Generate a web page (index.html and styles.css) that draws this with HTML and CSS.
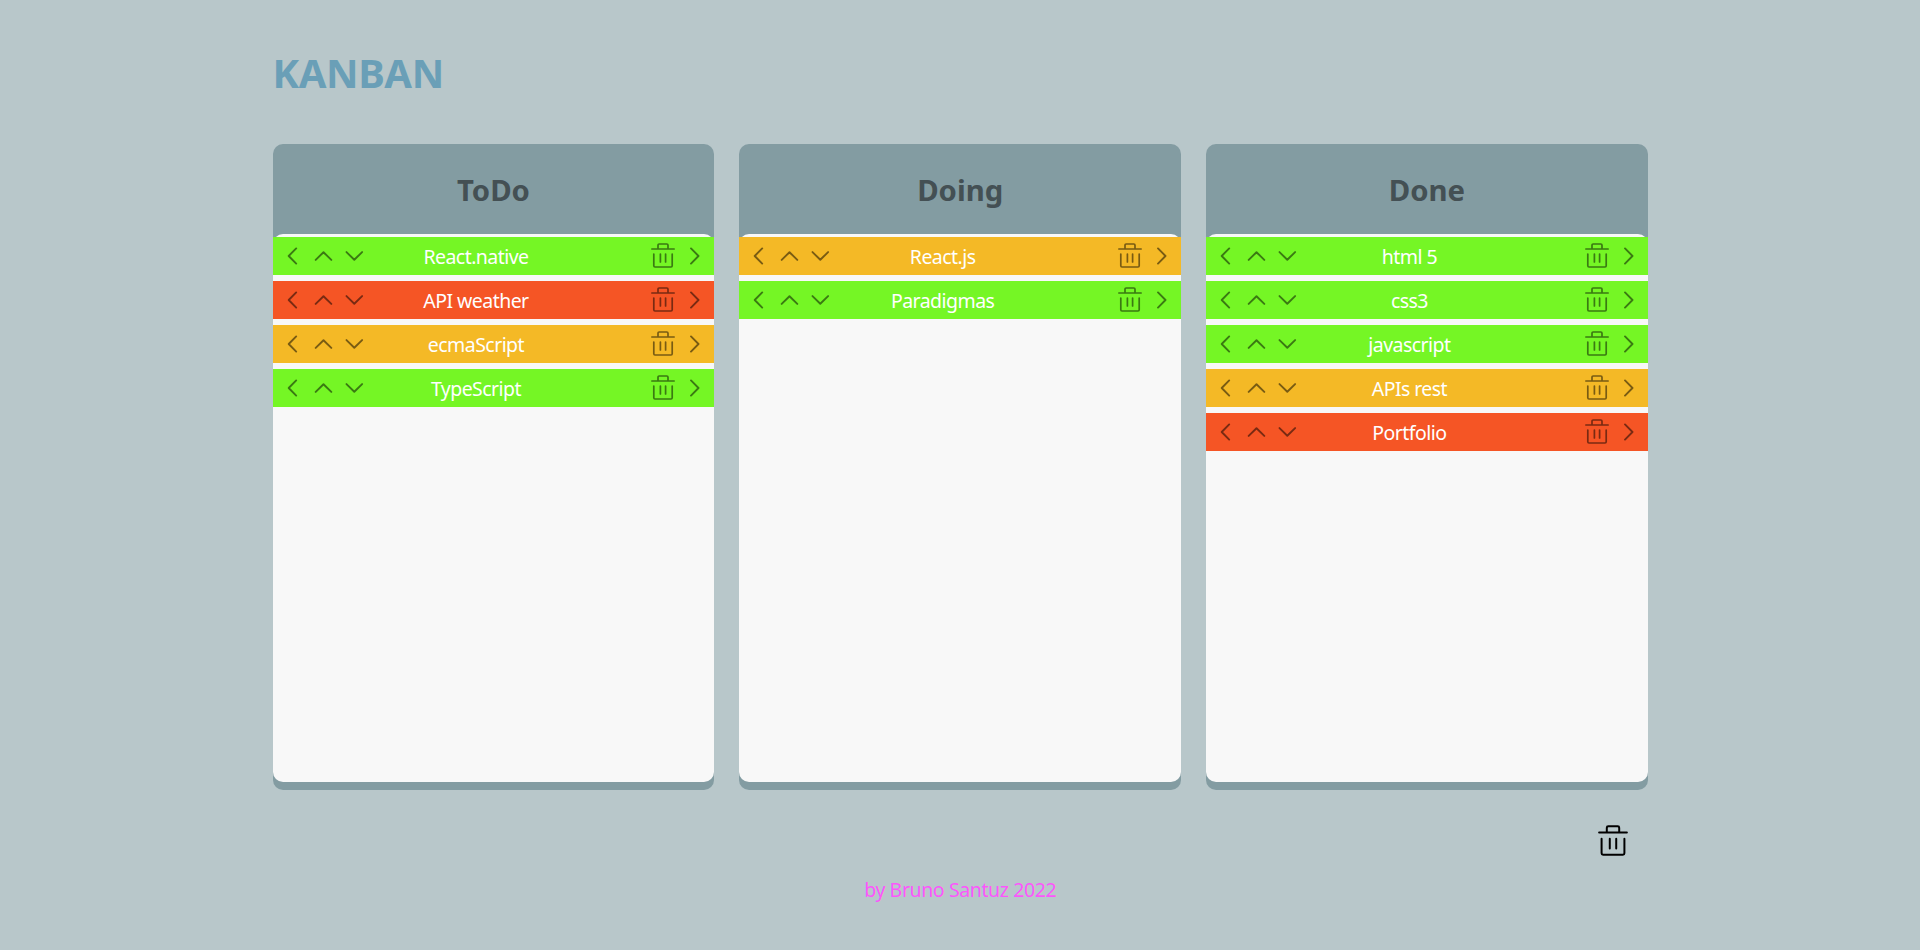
FILE: index.html
```html
<!DOCTYPE html>
<html lang="en">
<head>
<meta charset="utf-8">
<title>Kanban</title>
<link rel="stylesheet" href="styles.css">
</head>
<body>
<svg class="sprite" aria-hidden="true">
  <symbol id="left" viewBox="0 0 31 38"><path d="M19.2 11.4 11.7 19l7.5 7.6"/></symbol>
  <symbol id="right" viewBox="0 0 31 38"><path d="m12 11.4 7.5 7.6-7.5 7.6"/></symbol>
  <symbol id="up" viewBox="0 0 31 38"><path d="m7.7 22.9 7.8-7.7 7.8 7.7"/></symbol>
  <symbol id="down" viewBox="0 0 31 38"><path d="m7.5 15.1 7.8 7.7 7.8-7.7"/></symbol>
  <symbol id="trash" viewBox="0 0 24 25"><path d="M.8 6h22.4M7 6V2.2Q7 1 8.2 1h7.6Q17 1 17 2.2V6M2.8 11v11.8Q2.8 24 4 24h16q1.2 0 1.2-1.2V11M9.4 11v8M14.6 11v8"/></symbol>
</svg>
<main class="app">
  <h1 class="title">KANBAN</h1>
  <div class="board" id="board"></div>
  <div class="bin"><svg class="bin-icon"><use href="#trash"/></svg></div>
  <footer class="footer"><span class="credit">by Bruno Santuz 2022</span></footer>
</main>
<script src="board.js"></script>
</body>
</html>
```
FILE: styles.css
```css
* { box-sizing: border-box; }
body {
  margin: 0;
  min-height: 950px;
  background: #b8c7ca;
  font-family: "Noto Sans", "Open Sans", sans-serif;
}
.sprite { position: absolute; width: 0; height: 0; }
.app { width: 1375.2px; margin: 0 0 0 272.6px; padding-top: 46px; }
.title {
  margin: 0 0 44px;
  height: 54px;
  line-height: 54px;
  font-size: 40px;
  font-weight: 700;
  letter-spacing: -0.4px;
  color: #6a9fb7;
}
.board { display: grid; grid-template-columns: repeat(3, 1fr); gap: 25px; }
.column {
  height: 646px;
  display: flex;
  flex-direction: column;
  padding-bottom: 8px;
  border-radius: 10px;
  background: #839ca2;
}
.column-title {
  margin: 0;
  height: 90px;
  line-height: 93px;
  text-align: center;
  font-size: 29.3px;
  font-weight: 700;
  color: #445054;
}
.cards {
  flex: 1;
  display: flex;
  flex-direction: column;
  gap: 6px;
  padding-top: 3px;
  border-radius: 10px;
  background: #f8f8f8;
}
.card { display: flex; height: 38px; padding: 0 4px; }
.green { background: #75f625; }
.orange { background: #f4b926; }
.red { background: #f55525; }
.label {
  flex: 1;
  margin-right: 66px;
  text-align: center;
  white-space: nowrap;
  line-height: 40px;
  font-size: 19.5px;
  letter-spacing: -0.55px;
  color: #fff;
}
.icon, .trash, .bin-icon { fill: none; stroke: #000; stroke-linecap: round; stroke-linejoin: round; }
.icon { width: 31px; height: 38px; stroke-width: 1.9; opacity: .5; }
.trash { width: 24px; height: 25px; margin: 6px 4px 0 3px; stroke-width: 1.7; opacity: .5; }
.bin { display: flex; justify-content: flex-end; padding: 35px 20px 0 0; }
.bin-icon { width: 30px; height: 31px; stroke-width: 1.6; }
.footer { display: flex; justify-content: center; padding-top: 17px; }
.credit {
  font-size: 19.5px;
  line-height: 34px;
  letter-spacing: -0.4px;
  color: #fc56fc;
}
```
FILE: board.js
```js
const columns = [
  ["ToDo", [["React.native", "green"], ["API weather", "red"], ["ecmaScript", "orange"], ["TypeScript", "green"]]],
  ["Doing", [["React.js", "orange"], ["Paradigmas", "green"]]],
  ["Done", [["html 5", "green"], ["css3", "green"], ["javascript", "green"], ["APIs rest", "orange"], ["Portfolio", "red"]]]
];

const icon = (name) => `<svg class="icon"><use href="#${name}"/></svg>`;

const card = ([text, priority]) => `
  <div class="card ${priority}">
    ${icon("left")}${icon("up")}${icon("down")}
    <span class="label">${text}</span>
    <svg class="trash"><use href="#trash"/></svg>${icon("right")}
  </div>`;

document.getElementById("board").innerHTML = columns.map(([name, cards]) => `
  <section class="column">
    <h2 class="column-title">${name}</h2>
    <div class="cards">${cards.map(card).join("")}</div>
  </section>`).join("");
```
